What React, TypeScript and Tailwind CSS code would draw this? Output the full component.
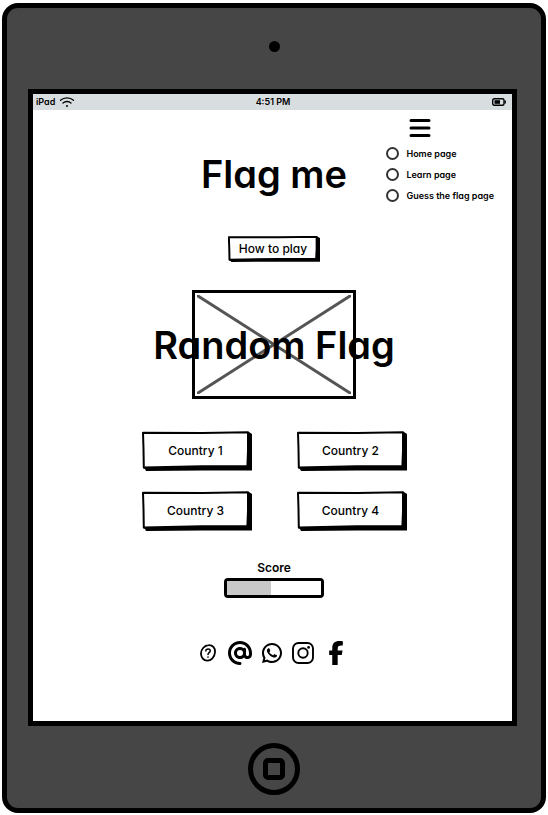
import type { ReactNode } from 'react'
import { FaAt, FaFacebookF } from 'react-icons/fa6'
import { RiWhatsappLine } from 'react-icons/ri'

const pages = ['Home page', 'Learn page', 'Guess the flag page']
const countries = ['Country 1', 'Country 2', 'Country 3', 'Country 4']

function StatusBar() {
  return (
    <div className="grid h-4 grid-cols-3 items-center bg-[#d8dde0] pr-1.5 pl-[3px] text-[9px] leading-4 font-semibold">
      <div className="flex items-center gap-1">
        <span>iPad</span>
        <svg className="h-3 w-4" viewBox="0 0 16 12" fill="none" stroke="currentColor" strokeWidth="1.3" strokeLinecap="round">
          <path d="M1.5 4.3C5 1 11 1 14.5 4.3M4 7c2.2-2 5.8-2 8 0" />
          <circle cx="8" cy="10" r="1" fill="currentColor" stroke="none" />
        </svg>
      </div>
      <span className="pl-1 text-center">4:51 PM</span>
      <svg className="h-2 w-3.5 justify-self-end" viewBox="0 0 14 8" fill="none" stroke="currentColor">
        <rect x="0.7" y="0.7" width="11.3" height="6.6" rx="1.5" strokeWidth="1.4" />
        <rect x="2.5" y="2.2" width="5.5" height="3.6" fill="currentColor" stroke="none" />
        <path d="M13.2 2.5v3" strokeWidth="1.4" />
      </svg>
    </div>
  )
}

function SketchButton({ children, size }: { children: ReactNode; size: string }) {
  return (
    <button type="button" className={`relative pr-0.5 text-[12px] leading-5 font-medium ${size}`}>
      <svg className="absolute inset-0 h-full w-full" viewBox="0 0 110 40" preserveAspectRatio="none" aria-hidden="true">
        <path d="M3 34L105 3L107 1L110 3V39.5L60 39.6L4 40L3 38L1 37Z" />
        <path
          d="M1 1.8L60 2L106 1.3L106 20L105.4 35L60 35.3L1.8 36.5L1.5 18Z"
          fill="#fff"
          stroke="#000"
          strokeWidth="2"
          strokeLinejoin="round"
          vectorEffect="non-scaling-stroke"
        />
      </svg>
      <span className="relative">{children}</span>
    </button>
  )
}

function SiteMenu() {
  return (
    <nav className="justify-self-end pt-2 pr-[18px]">
      <button type="button" aria-label="Menu" className="ml-[23px] block h-5 w-[22px]">
        <svg className="h-5 w-[22px]" viewBox="0 0 22 20" stroke="currentColor" strokeWidth="3" strokeLinecap="round">
          <path d="M2 2.5h18M2 10h18M2 17.5h18" />
        </svg>
      </button>
      <div className="mt-[5px]">
        {pages.map((page) => (
          <label key={page} className="flex h-[21px] items-center gap-[7px] text-[9px] font-semibold whitespace-nowrap">
            <input type="radio" name="page" className="size-[13px] shrink-0 appearance-none rounded-full border-2 border-[#333] bg-white checked:bg-black" />
            {page}
          </label>
        ))}
      </div>
    </nav>
  )
}

function SocialLinks() {
  return (
    <div className="mt-[43px] flex h-6 items-center justify-center pr-1">
      <a href="#help" aria-label="Help" className="mr-3">
        <svg className="h-[18px] w-4" viewBox="0 0 16 18" fill="none" stroke="currentColor" strokeLinecap="round" strokeLinejoin="round">
          <path d="M8.5 1.2C12.5.8 15.3 4 15 8.2C14.7 13 11 16.8 7.3 16.7C3.3 16.6.8 13 1 9.3C1.2 5 4.5 1.5 8.5 1.2Z" strokeWidth="1.8" />
          <path d="M5.8 6.9C6 4.3 10.5 4.3 10.2 6.9C10 8.7 8 8.7 8 10.6M8 13v.2" strokeWidth="1.5" />
        </svg>
      </a>
      <a href="#email" aria-label="Email" className="mr-2"><FaAt className="size-6" /></a>
      <a href="#whatsapp" aria-label="WhatsApp" className="mr-2"><RiWhatsappLine className="size-6" /></a>
      <a href="#instagram" aria-label="Instagram" className="mr-3.5">
        <svg className="size-[22px]" viewBox="0 0 22 22" fill="none" stroke="currentColor" strokeWidth="1.9">
          <rect x="1" y="1" width="20" height="20" rx="5.5" />
          <circle cx="11" cy="11" r="4.7" />
          <circle cx="16.6" cy="5.4" r="1.4" fill="currentColor" stroke="none" />
        </svg>
      </a>
      <a href="#facebook" aria-label="Facebook"><FaFacebookF className="h-6 w-4" /></a>
    </div>
  )
}

export default function App() {
  return (
    <div className="min-h-screen bg-white px-0.5 pt-[3px] pb-0.5 font-['Inter','Liberation_Sans',sans-serif] text-black [font-feature-settings:'cv11']">
      <div className="rounded-2xl border-[5px] border-black bg-[#464646] px-[21px]">
        <div className="flex h-[81px] items-center justify-center pb-1">
          <div className="size-[11px] rounded-full bg-black" />
        </div>
        <main className="mr-[3px] border-[5px] border-black bg-white pb-14">
          <StatusBar />
          <div className="pl-[3px]">
            <header className="grid grid-cols-[1fr_auto_1fr]">
              <h1 className="col-start-2 pt-10 text-[38px] leading-[48px] font-semibold">Flag me</h1>
              <SiteMenu />
            </header>
            <div className="mt-[30px] flex justify-center">
              <SketchButton size="h-[26px] w-[92px]">How to play</SketchButton>
            </div>
            <figure className="relative mx-auto mt-7 h-[109px] w-[164px] border-[3px] border-black p-0.5">
              <svg className="h-full w-full" viewBox="0 0 154 99" preserveAspectRatio="none" stroke="#555" strokeWidth="3" strokeLinecap="round">
                <path d="M1 1L153 98M153 1L1 98" />
              </svg>
              <figcaption className="absolute inset-0 flex items-center justify-center text-[38px] leading-[48px] font-semibold whitespace-nowrap">
                Random Flag
              </figcaption>
            </figure>
            <div className="mt-8 grid grid-cols-[auto_auto] justify-center gap-x-[45px] gap-y-5">
              {countries.map((country) => (
                <SketchButton key={country} size="h-10 w-[110px]">{country}</SketchButton>
              ))}
            </div>
            <div className="mt-[27px] flex flex-col items-center">
              <label htmlFor="score" className="text-[12px] leading-5 font-semibold">Score</label>
              <progress
                id="score"
                value={47}
                max={100}
                className="h-5 w-[100px] appearance-none rounded-sm border-[3px] border-black bg-white [&::-webkit-progress-bar]:bg-white [&::-webkit-progress-value]:bg-[#c9c9c9]"
              />
            </div>
            <SocialLinks />
          </div>
        </main>
        <div className="flex h-[82px] items-center justify-center pt-1">
          <button type="button" aria-label="Home" className="flex size-[52px] items-center justify-center rounded-full border-[5px] border-black">
            <span className="size-[22px] rounded-[5px] border-[5px] border-black" />
          </button>
        </div>
      </div>
    </div>
  )
}
